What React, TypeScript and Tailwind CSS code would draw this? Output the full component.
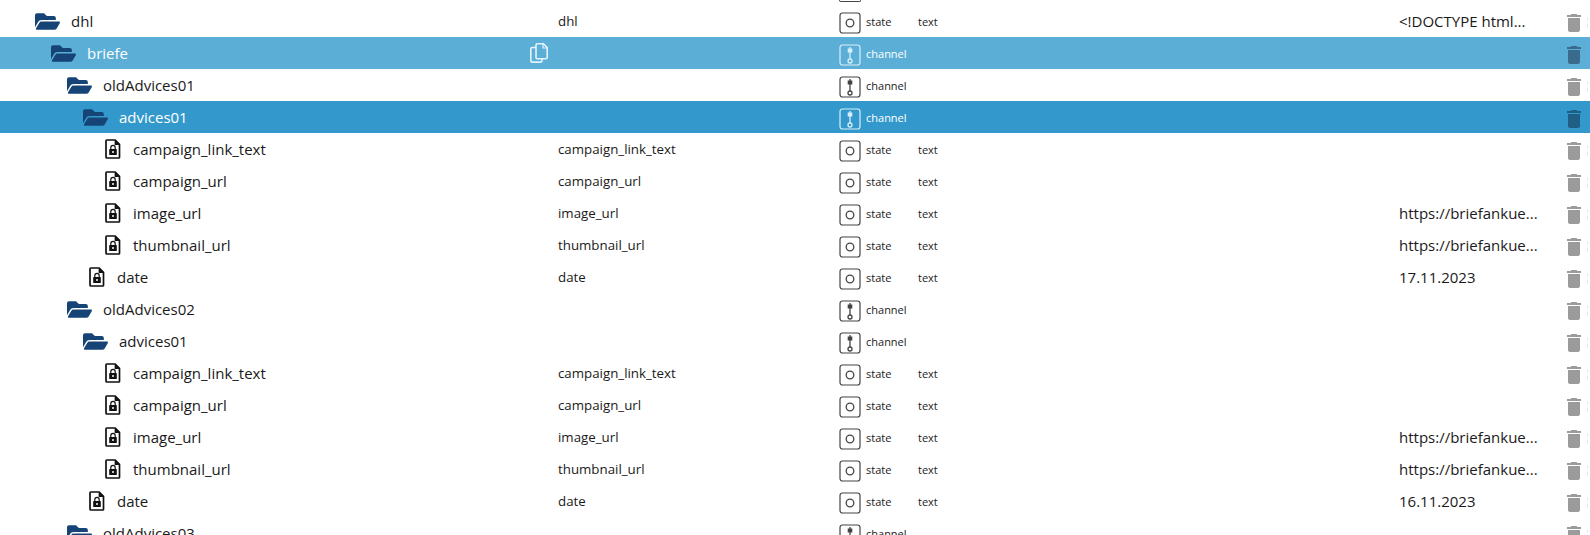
import React from 'react';
import { FaFolderOpen } from 'react-icons/fa';
import { MdDelete } from 'react-icons/md';

type Row = {
    name: string;
    depth: number;
    id?: string;
    kind: 'folder' | 'state';
    type: 'state' | 'channel';
    role?: string;
    value?: string;
    selected?: 'light' | 'dark';
};

function StateIcon() {
    return (
        <svg viewBox="0 0 22 22" className="w-[22px] h-[22px]" fill="none" stroke="currentColor">
            <rect x="1" y="1" width="20" height="20" rx="2.5" strokeWidth="1.2" />
            <circle cx="11" cy="11" r="3.8" strokeWidth="1.3" />
        </svg>
    );
}

function ChannelIcon() {
    return (
        <svg viewBox="0 0 22 22" className="w-[22px] h-[22px]" fill="none" stroke="currentColor">
            <rect x="1" y="1" width="20" height="20" rx="2.5" strokeWidth="1.2" />
            <path d="M11 3v12" strokeWidth="1.3" />
            <rect x="8.7" y="4.5" width="4.6" height="4" fill="currentColor" stroke="none" />
            <circle cx="11" cy="17" r="2" strokeWidth="1.3" />
        </svg>
    );
}

function FileLockIcon() {
    return (
        <svg viewBox="0 0 16 20" className="w-[16px] h-[20px]" fill="none">
            <path d="M1.8 1h8.4l4.3 4.3v12.9a.8.8 0 0 1-.8.8H1.8a.8.8 0 0 1-.8-.8V1.8a.8.8 0 0 1 .8-.8z" stroke="#111" strokeWidth="1.7" />
            <path d="M9.6 1v5h5" fill="#111" />
            <rect x="4.2" y="10" width="7.6" height="6" rx=".6" fill="#111" />
            <path d="M5.8 10V8.6a2.2 2.2 0 0 1 4.4 0V10" stroke="#111" strokeWidth="1.2" />
            <circle cx="8" cy="13" r="1" fill="#fff" />
        </svg>
    );
}

function CopyIcon() {
    return (
        <svg viewBox="0 0 18 20" className="w-[18px] h-[20px] text-[#e4f3fa]" fill="none" stroke="currentColor" strokeWidth="1.6">
            <path d="M6 4.5H2.2A1.4 1.4 0 0 0 .8 5.9v11.8a1.4 1.4 0 0 0 1.4 1.4h8.4a1.4 1.4 0 0 0 1.4-1.4V16" />
            <path d="M7.2.8h6.2l3.8 3.8v9.9a1.2 1.2 0 0 1-1.2 1.2H7.2A1.2 1.2 0 0 1 6 14.5V2a1.2 1.2 0 0 1 1.2-1.2z" />
            <path d="M13 1v4h4" strokeWidth="1.2" />
        </svg>
    );
}

const rows: Row[] = [
    { name: 'dhl', depth: 0, id: 'dhl', kind: 'folder', type: 'state', role: 'text', value: '<!DOCTYPE html...' },
    { name: 'briefe', depth: 1, kind: 'folder', type: 'channel', selected: 'light' },
    { name: 'oldAdvices01', depth: 2, kind: 'folder', type: 'channel' },
    { name: 'advices01', depth: 3, kind: 'folder', type: 'channel', selected: 'dark' },
    { name: 'campaign_link_text', depth: 4, id: 'campaign_link_text', kind: 'state', type: 'state', role: 'text' },
    { name: 'campaign_url', depth: 4, id: 'campaign_url', kind: 'state', type: 'state', role: 'text' },
    { name: 'image_url', depth: 4, id: 'image_url', kind: 'state', type: 'state', role: 'text', value: 'https://briefankue...' },
    { name: 'thumbnail_url', depth: 4, id: 'thumbnail_url', kind: 'state', type: 'state', role: 'text', value: 'https://briefankue...' },
    { name: 'date', depth: 3, id: 'date', kind: 'state', type: 'state', role: 'text', value: '17.11.2023' },
    { name: 'oldAdvices02', depth: 2, kind: 'folder', type: 'channel' },
    { name: 'advices01', depth: 3, kind: 'folder', type: 'channel' },
    { name: 'campaign_link_text', depth: 4, id: 'campaign_link_text', kind: 'state', type: 'state', role: 'text' },
    { name: 'campaign_url', depth: 4, id: 'campaign_url', kind: 'state', type: 'state', role: 'text' },
    { name: 'image_url', depth: 4, id: 'image_url', kind: 'state', type: 'state', role: 'text', value: 'https://briefankue...' },
    { name: 'thumbnail_url', depth: 4, id: 'thumbnail_url', kind: 'state', type: 'state', role: 'text', value: 'https://briefankue...' },
    { name: 'date', depth: 3, id: 'date', kind: 'state', type: 'state', role: 'text', value: '16.11.2023' },
    { name: 'oldAdvices03', depth: 2, kind: 'folder', type: 'channel' },
];

const indents = ['pl-[35px]', 'pl-[51px]', 'pl-[67px]', 'pl-[83px]', 'pl-[99px]'];

function TreeRow({ row }: { row: Row }) {
    const bg = row.selected === 'light' ? 'bg-[#5baed6] text-white' : row.selected === 'dark' ? 'bg-[#3399cc] text-white' : 'bg-white text-[#1a1a1a]';
    const iconColor = row.selected ? 'text-[#d8eef8]' : 'text-[#444]';
    const trash = row.selected === 'light' ? 'text-[#3a6b8c]' : row.selected === 'dark' ? 'text-[#205f84]' : 'text-[#9b9b9b]';

    return (
        <div className={`flex items-center h-8 shrink-0 ${bg}`}>
            <div className={`flex items-center w-[530px] shrink-0 ${indents[row.depth]}`}>
                {row.kind === 'folder' ? (
                    <FaFolderOpen className="w-[25px] h-[25px] text-[#164477] mr-[11px] shrink-0" />
                ) : (
                    <span className="ml-[6px] mr-[12px] flex shrink-0"><FileLockIcon /></span>
                )}
                <span className="text-[15px]">{row.name}</span>
            </div>
            <div className="w-[28px] shrink-0">
                {row.selected === 'light' && <CopyIcon />}
            </div>
            <div className="w-[281px] shrink-0 pt-[2px] text-[13.3px]">{row.id}</div>
            <div className="w-[79px] shrink-0 pt-[2px] flex items-center gap-[5px] text-[11px]">
                <span className={`flex mt-[2px] ${iconColor}`}>{row.type === 'state' ? <StateIcon /> : <ChannelIcon />}</span>
                <span>{row.type}</span>
            </div>
            <div className="w-[481px] shrink-0 pt-[2px] text-[11px]">{row.role}</div>
            <div className="w-[163px] shrink-0 text-[15px]">{row.value}</div>
            <MdDelete className={`w-6 h-6 mt-1 shrink-0 ${trash}`} />
            {!row.selected && (
                <span className="ml-[1px] mt-[3px] flex flex-col gap-[3px] w-px shrink-0">
                    <span className="h-1 bg-[#e8e8e8]" />
                    <span className="h-1 bg-[#e8e8e8]" />
                </span>
            )}
        </div>
    );
}

export default function App() {
    return (
        <div className="h-[535px] w-[1590px] overflow-hidden bg-white font-['Open_Sans',sans-serif]">
            <div className="flex flex-col">
                {/* bottom edge of the row scrolled out above */}
                <div className="ml-[839px] w-[22px] h-[2px] mb-[3px] border-x border-b border-[#444] rounded-b-[3px]" />
                {rows.map((row, i) => (
                    <TreeRow key={i} row={row} />
                ))}
            </div>
        </div>
    );
}
